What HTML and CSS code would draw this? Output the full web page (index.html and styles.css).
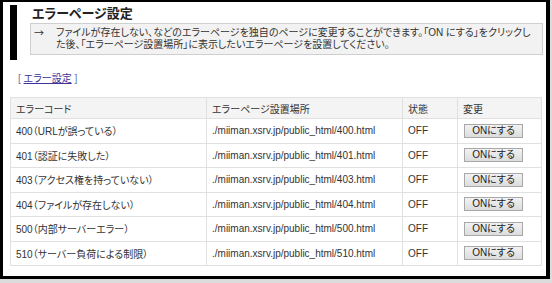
FILE: index.html
```html
<!DOCTYPE html>
<html lang="ja">
<head>
<meta charset="utf-8">
<title>エラーページ設定</title>
<link rel="stylesheet" href="styles.css">
</head>
<body>
<div class="frame">
  <div class="heading">
    <div class="bar"></div>
    <div class="head-main">
      <h1 class="title">エラーページ設定</h1>
      <div class="desc">
        <span class="arrow">→</span>
        <p class="desc-text">ファイルが存在しない、などのエラーページを独自のページに変更することができます。「ON にする」をクリックした後、「エラーページ設置場所」に表示したいエラーページを設置してください。</p>
      </div>
    </div>
  </div>
  <div class="links"><span class="br">[</span> <a href="#" class="link">エラー設定</a> <span class="br">]</span></div>
  <table class="grid">
    <thead>
      <tr><th class="c1">エラーコード</th><th class="c2">エラーページ設置場所</th><th class="c3">状態</th><th class="c4">変更</th></tr>
    </thead>
    <tbody>
      <tr><td>400（URLが誤っている）</td><td>./miiman.xsrv.jp/public_html/400.html</td><td>OFF</td><td><button class="btn">ONにする</button></td></tr>
      <tr><td>401（認証に失敗した）</td><td>./miiman.xsrv.jp/public_html/401.html</td><td>OFF</td><td><button class="btn">ONにする</button></td></tr>
      <tr><td>403（アクセス権を持っていない）</td><td>./miiman.xsrv.jp/public_html/403.html</td><td>OFF</td><td><button class="btn">ONにする</button></td></tr>
      <tr><td>404（ファイルが存在しない）</td><td>./miiman.xsrv.jp/public_html/404.html</td><td>OFF</td><td><button class="btn">ONにする</button></td></tr>
      <tr><td>500（内部サーバーエラー）</td><td>./miiman.xsrv.jp/public_html/500.html</td><td>OFF</td><td><button class="btn">ONにする</button></td></tr>
      <tr><td>510（サーバー負荷による制限）</td><td>./miiman.xsrv.jp/public_html/510.html</td><td>OFF</td><td><button class="btn">ONにする</button></td></tr>
    </tbody>
  </table>
</div>
</body>
</html>
```
FILE: styles.css
```css
html, body {
  margin: 0;
  padding: 0;
}
body {
  background: #dcdcdc;
  width: 552px;
  height: 283px;
  overflow: hidden;
  font-family: "Liberation Sans", "Noto Sans CJK JP", sans-serif;
  font-feature-settings: "palt";
  color: #333;
  font-size: 10px;
}
.frame {
  box-sizing: border-box;
  width: 550px;
  height: 279px;
  background: #fff;
  border-style: solid;
  border-color: #000;
  border-width: 2px 4px 3px 3px;
}
.heading {
  display: flex;
  margin: 3px 0 0 7px;
}
.bar {
  width: 7px;
  height: 55px;
  background: #000;
  flex: none;
}
.head-main {
  margin-left: 13px;
  display: flex;
  flex-direction: column;
}
.title {
  margin: 0;
  padding-left: 2px;
  height: 18px;
  font-size: 13px;
  line-height: 18px;
  font-weight: bold;
  color: #222;
}
.desc {
  box-sizing: border-box;
  width: 513px;
  height: 32px;
  background: #f2f2f2;
  border: 1px solid #cfcfcf;
  display: flex;
  padding: 3px 10px 0 3px;
}
.arrow {
  width: 22px;
  flex: none;
  font-family: "Noto Sans CJK JP", sans-serif;
  font-feature-settings: normal;
  font-size: 10px;
  line-height: 12px;
  color: #333;
}
.desc-text {
  margin: 0;
  font-size: 10px;
  line-height: 12px;
  color: #333;
}
.links {
  margin: 12px 0 0 15px;
  height: 14px;
  line-height: 14px;
  font-size: 10px;
  color: #6677aa;
}
.link {
  color: #3b3399;
  text-decoration: underline;
}
.grid {
  margin: 11px 0 0 7px;
  width: 532px;
  border-collapse: collapse;
  table-layout: fixed;
}
.grid th, .grid td {
  border: 1px solid #e0e0e0;
  text-align: left;
  font-weight: normal;
  padding: 0 0 0 5px;
  font-size: 10px;
  color: #333;
  white-space: nowrap;
}
.grid th {
  height: 20px;
  background: #f4f4f4;
}
.grid td {
  height: 23.5px;
}
.c1 { width: 190px; }
.c2 { width: 190px; }
.c3 { width: 49px; }
.c4 { width: auto; }
.grid td:nth-child(4) {
  padding-left: 6px;
}
.btn {
  box-sizing: border-box;
  width: 59px;
  height: 14px;
  padding: 0;
  font-family: inherit;
  font-feature-settings: "palt";
  font-size: 10px;
  line-height: 12px;
  color: #222;
  background: linear-gradient(#f2f2f2, #dcdcdc);
  border: 1px solid #a8a8a8;
  border-radius: 0;
}
```
